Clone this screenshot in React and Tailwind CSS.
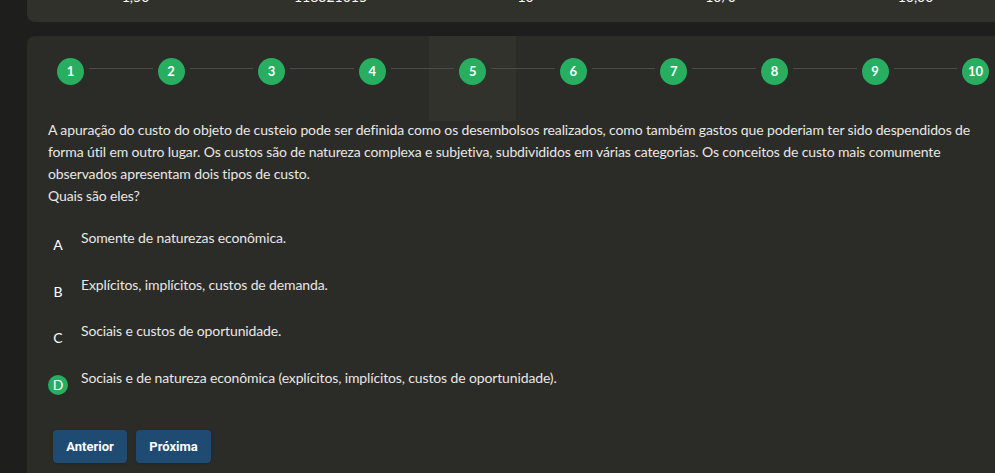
import React from "react";

const steps = [1, 2, 3, 4, 5, 6, 7, 8, 9, 10];
const options = [
  { l: "A", t: "Somente de naturezas econômica." },
  { l: "B", t: "Explícitos, implícitos, custos de demanda." },
  { l: "C", t: "Sociais e custos de oportunidade." },
  { l: "D", t: "Sociais e de natureza econômica (explícitos, implícitos, custos de oportunidade).", sel: true },
];
const top = ["1,50", "118321015", "10", "10/0", "10,00"];

export default function App() {
  return (
    <div className="w-[995px] h-[473px] overflow-hidden bg-[#1e1e1c] font-['Lato',sans-serif] text-[#e8e8e6]">
      <div className="ml-[27px] w-[1010px]">
        <div className="h-[22px] bg-[#31312c] rounded-bl-[8px] flex pl-[11px] overflow-hidden">
          {top.map((v, i) => (
            <div key={i} className="w-[195px] text-center text-[14px] leading-[14px] -mt-[10px] text-white">
              {v}
            </div>
          ))}
        </div>
        <div className="mt-[14px] bg-[#2b2b27] rounded-tl-[8px] pl-[21px] pt-[22px] pb-[20px] relative isolate">
          <div className="flex items-start w-[932px] ml-[9px]">
            {steps.map((s, i) => (
              <React.Fragment key={s}>
                <div className="relative w-[27px] h-[27px] shrink-0">
                  {s === 5 && (
                    <div className="absolute -left-[30px] -top-[22px] w-[87px] h-[85px] bg-[#32322d] -z-10" />
                  )}
                  <div className="w-[27px] h-[27px] rounded-full bg-[#27ae60] flex items-center justify-center text-white font-bold text-[13px] leading-none">
                    {s}
                  </div>
                </div>
                {i < steps.length - 1 && <div className="flex-1 h-px bg-[#4c4c47] mx-[5px] mt-[10px]" />}
              </React.Fragment>
            ))}
          </div>
          <div className="mt-[34px] w-[940px] text-[14px] leading-[22px] tracking-[-0.13px]">
            <p>
              A apuração do custo do objeto de custeio pode ser definida como os desembolsos realizados, como também gastos que poderiam ter sido despendidos de forma útil em outro lugar. Os custos são de natureza complexa e subjetiva, subdivididos em várias categorias. Os conceitos de custo mais comumente observados apresentam dois tipos de custo.
            </p>
            <p>Quais são eles?</p>
          </div>
          <div className="mt-[20px] flex flex-col gap-[18.7px]">
            {options.map((o) => (
              <div key={o.l} className="flex items-start h-[28px]">
                <div
                  className={
                    "shrink-0 mt-[8px] w-[20px] h-[20px] rounded-full flex items-center justify-center text-[14px] leading-none " +
                    (o.sel ? "bg-[#27ae60] text-white" : "text-white")
                  }
                >
                  {o.l}
                </div>
                <div className="ml-[13px] text-[14px] leading-[22px] tracking-[-0.13px]">{o.t}</div>
              </div>
            ))}
          </div>
          <div className="mt-[35px] ml-[5px] flex gap-[9px] font-['Roboto',sans-serif]">
            <button className="w-[74px] h-[33px] rounded-[4px] bg-[#1f4a71] text-white font-bold text-[13px] shadow-sm">
              Anterior
            </button>
            <button className="w-[75px] h-[33px] rounded-[4px] bg-[#1f4a71] text-white font-bold text-[13px] shadow-sm">
              Próxima
            </button>
          </div>
        </div>
      </div>
    </div>
  );
}
